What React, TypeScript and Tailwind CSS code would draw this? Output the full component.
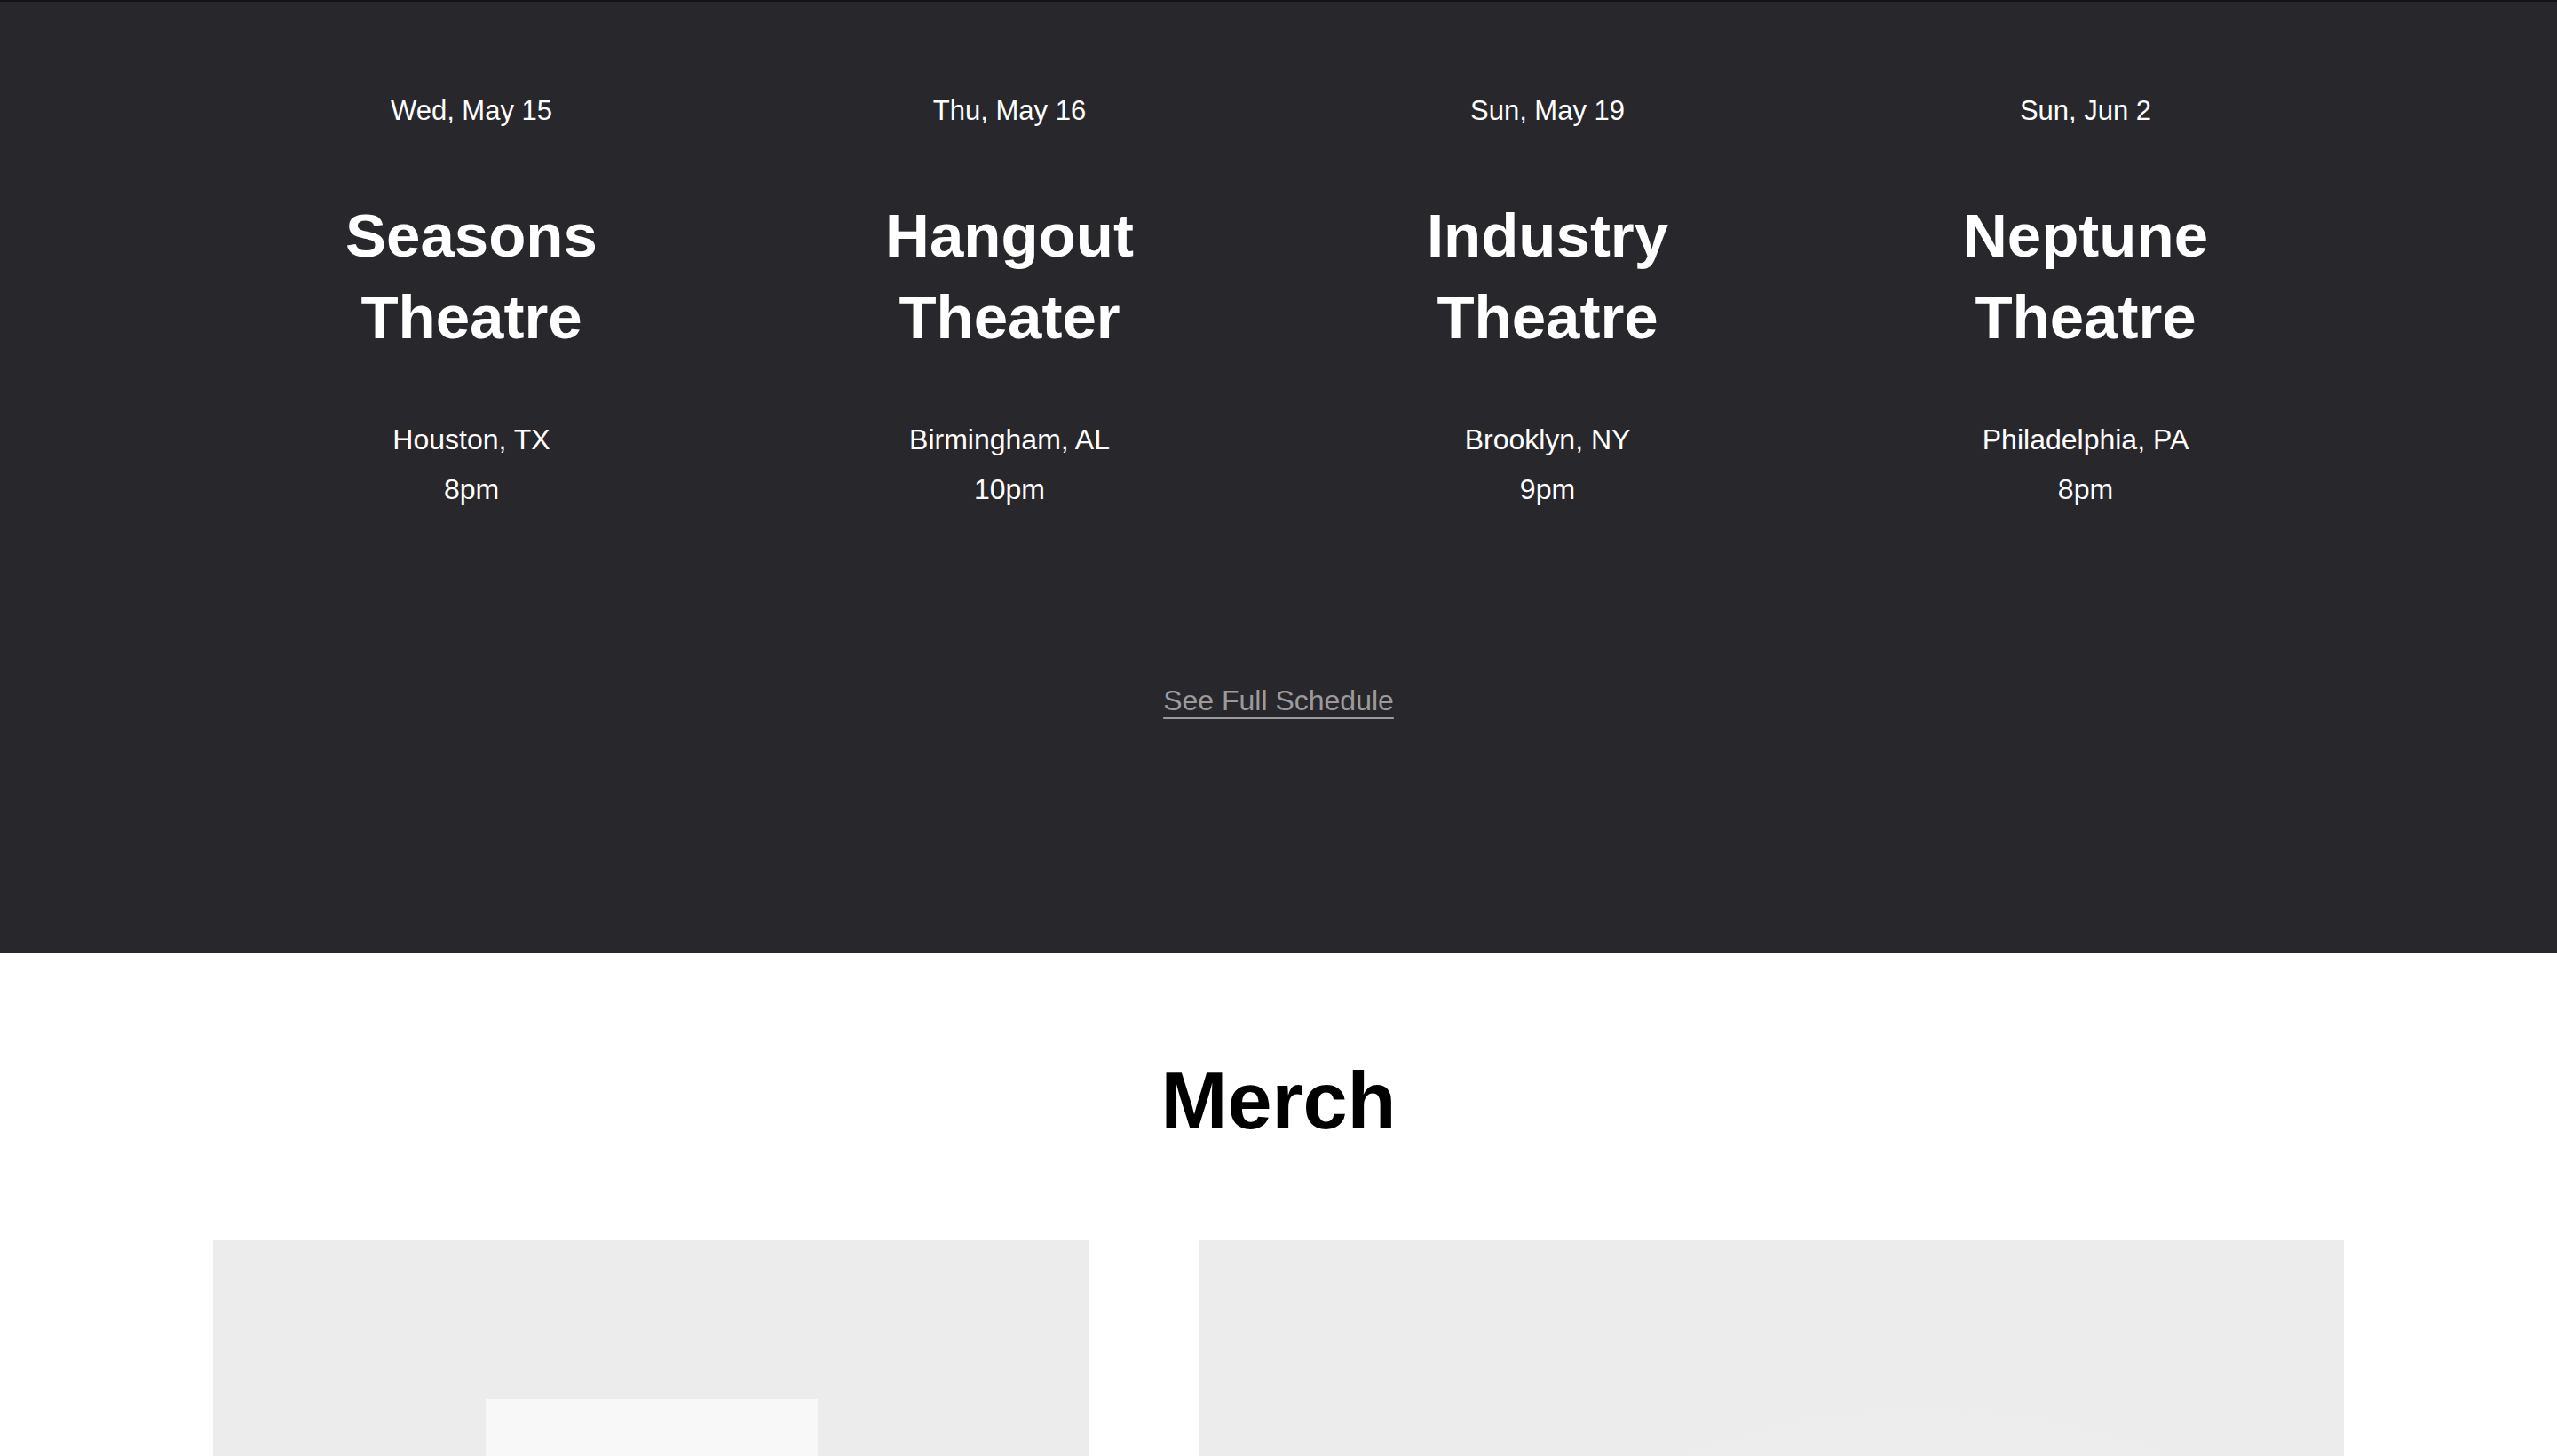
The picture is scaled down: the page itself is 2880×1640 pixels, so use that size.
import React from "react";

const shows = [
  { date: "Wed, May 15", venue: "Seasons Theatre", city: "Houston, TX", time: "8pm" },
  { date: "Thu, May 16", venue: "Hangout Theater", city: "Birmingham, AL", time: "10pm" },
  { date: "Sun, May 19", venue: "Industry Theatre", city: "Brooklyn, NY", time: "9pm" },
  { date: "Sun, Jun 2", venue: "Neptune Theatre", city: "Philadelphia, PA", time: "8pm" },
];

const ShowCard = ({ show }: { show: (typeof shows)[number] }) => {
  return (
    <div className="flex flex-col items-center text-center text-white">
      <p className="text-[31px] leading-[36px]">{show.date}</p>
      <h3 className="mt-[77px] max-w-[420px] text-[69px] leading-[92px] font-bold">
        {show.venue}
      </h3>
      <div className="mt-[63px] text-[32px] leading-[56px]">
        <p>{show.city}</p>
        <p>{show.time}</p>
      </div>
    </div>
  );
};

const App = () => {
  return (
    <div className="min-h-screen bg-white font-['Liberation_Sans',Arial,sans-serif]">
      <section className="h-[1073px] border-t-2 border-[#141418] bg-[#28272c] pt-[105px]">
        <div className="mx-auto grid w-[2400px] grid-cols-4 gap-6">
          {shows.map((show) => (
            <ShowCard key={show.date} show={show} />
          ))}
        </div>
        <div className="mt-[190px] flex justify-center">
          <a
            href="#"
            className="text-[32px] leading-[40px] text-[#9b9a9e] underline decoration-2 underline-offset-[8px]"
          >
            See Full Schedule
          </a>
        </div>
      </section>

      <section className="pt-[114px]">
        <h2 className="text-center text-[90px] leading-[106px] font-bold text-black">Merch</h2>
        <div className="mx-auto mt-[104px] flex w-[2400px] gap-[123px]">
          {/* tee */}
          <div className="flex h-[900px] w-[987px] shrink-0 justify-center bg-[#ececec] pt-[179px]">
            <div className="h-[600px] w-[374px] bg-[#f8f8f8]" />
          </div>
          {/* hat / bag */}
          <div className="h-[900px] flex-1 bg-[#ececec]">
            <svg viewBox="0 0 1290 900" className="h-full w-full" preserveAspectRatio="none">
              <defs>
                <radialGradient id="blob" cx="0.5" cy="0.5" r="0.5">
                  <stop offset="0%" stopColor="#f3f3f3" />
                  <stop offset="70%" stopColor="#efefef" />
                  <stop offset="100%" stopColor="#ececec" />
                </radialGradient>
              </defs>
              <ellipse cx="820" cy="470" rx="480" ry="280" fill="url(#blob)" />
            </svg>
          </div>
        </div>
      </section>
    </div>
  );
};

export default App;
